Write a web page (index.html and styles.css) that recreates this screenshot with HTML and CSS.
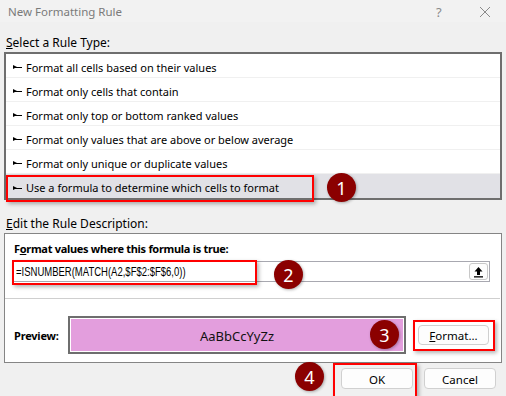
FILE: index.html
```html
<!DOCTYPE html>
<html>
<head>
<meta charset="utf-8">
<link rel="stylesheet" href="styles.css">
</head>
<body>
<div class="dialog">
  <div class="titlebar">
    <span class="title">New Formatting Rule</span>
    <span class="tb-help">?</span>
    <span class="tb-close">
      <svg width="12" height="12" viewBox="0 0 12 12"><path d="M1 1L11 11M11 1L1 11" stroke="#8a8a8a" stroke-width="1"/></svg>
    </span>
  </div>

  <div class="label first"><u>S</u>elect a Rule Type:</div>
  <div class="listbox">
    <div class="item"><span class="pointer"></span>Format all cells based on their values</div>
    <div class="item"><span class="pointer"></span>Format only cells that contain</div>
    <div class="item"><span class="pointer"></span>Format only top or bottom ranked values</div>
    <div class="item"><span class="pointer"></span>Format only values that are above or below average</div>
    <div class="item"><span class="pointer"></span>Format only unique or duplicate values</div>
    <div class="item selected"><span class="pointer"></span>Use a formula to determine which cells to format</div>
  </div>

  <div class="label second"><u>E</u>dit the Rule Description:</div>
  <div class="descbox">
    <div class="desc-title">F<u>o</u>rmat values where this formula is true:</div>
    <div class="formula">
      <span class="formula-cell"><span class="formula-text">=ISNUMBER(MATCH(A2,$F$2:$F$6,0))</span></span>
      <span class="collapse-btn">
        <svg width="11" height="12" viewBox="0 0 11 12"><path d="M5.5 1L1.5 5.5H4V9H7V5.5H9.5Z" fill="#000"/><rect x="1" y="10.2" width="9" height="1.3" fill="#000"/></svg>
      </span>
    </div>
    <div class="sep"></div>
    <div class="preview-row">
      <span class="preview-label">Preview:</span>
      <div class="preview-box"><div class="preview-fill">AaBbCcYyZz</div></div>
      <span class="btn format-btn"><u>F</u>ormat...</span>
    </div>
  </div>

  <div class="buttons">
    <span class="btn">OK</span>
    <span class="btn">Cancel</span>
  </div>
</div>

<div class="annotations">
  <div class="redbox rb1"></div>
  <div class="redbox rb2"></div>
  <div class="redbox rb3"></div>
  <div class="redbox rb4"></div>
  <div class="badge b1">1</div>
  <div class="badge b2">2</div>
  <div class="badge b3">3</div>
  <div class="badge b4">4</div>
</div>
</body>
</html>
```

FILE: styles.css
```css
html, body {
  margin: 0;
  padding: 0;
}
body {
  width: 506px;
  height: 396px;
  overflow: hidden;
  background: #f0f0f0;
  font-family: "Segoe UI", "Noto Sans", "Open Sans", sans-serif;
  font-size: 12px;
  color: #000;
  position: relative;
}
.dialog {
  display: flex;
  flex-direction: column;
}
.titlebar {
  height: 22px;
  display: flex;
  align-items: center;
  padding-left: 8px;
  padding-top: 1px;
  box-sizing: border-box;
  background: #f2f2f2;
  color: #7a7a7a;
  font-size: 11.5px;
}
.title { flex: 1; }
.tb-help {
  width: 10px;
  margin-right: 33px;
  color: #8a8a8a;
  font-size: 13px;
}
.tb-close {
  display: flex;
  margin-right: 15px;
}
.label {
  line-height: 16px;
  height: 16px;
  padding-left: 6px;
}
.label.first { margin-top: 13px; margin-bottom: 1px; }
.label.second { margin-top: 16px; margin-bottom: 1px; }
u { text-decoration: underline; text-underline-offset: 1px; }

.listbox {
  margin: 0 4px;
  border: 2px solid #6e6e6e;
  background: #fff;
  display: flex;
  flex-direction: column;
}
.item {
  height: 24px;
  box-sizing: border-box;
  display: flex;
  align-items: center;
  padding-left: 7px;
  padding-top: 3px;
  border-bottom: 1px solid #f0f0f0;
  font-size: 11px;
}
.item:last-child { border-bottom: none; }
.item.selected { background: #e1e1e6; }
.pointer {
  width: 9px;
  height: 5px;
  margin-right: 4px;
  margin-top: 1px;
  background:
    linear-gradient(#000, #000) 2px 2px / 7px 1px no-repeat;
  position: relative;
}
.pointer::before {
  content: "";
  position: absolute;
  left: 0;
  top: 0;
  border-top: 2.5px solid transparent;
  border-bottom: 2.5px solid transparent;
  border-left: 4px solid #000;
}

.descbox {
  margin: 0 4px;
  border: 1px solid #858585;
  background: #fff;
  height: 128px;
  display: flex;
  flex-direction: column;
}
.desc-title {
  font-weight: bold;
  font-size: 11px;
  letter-spacing: -0.3px;
  line-height: 16px;
  margin-top: 7px;
  padding-left: 9px;
}
.formula {
  margin: 4px 11px 0 7px;
  height: 21px;
  box-sizing: border-box;
  border: 1px solid #a8a8b0;
  display: flex;
  align-items: center;
  padding-left: 3px;
  padding-right: 1px;
}
.formula-cell {
  flex: 1;
  display: flex;
  align-items: center;
  overflow: hidden;
}
.formula-text {
  display: inline-block;
  white-space: nowrap;
  font-family: "Liberation Sans", Arial, sans-serif;
  font-size: 12.5px;
  transform: scaleX(0.76);
  transform-origin: left center;
  padding-top: 1px;
}
.collapse-btn {
  width: 19px;
  height: 17px;
  box-sizing: border-box;
  border: 1px solid #c8c8c8;
  border-radius: 3px;
  background: #fdfdfd;
  display: flex;
  align-items: center;
  justify-content: center;
}
.sep {
  height: 1px;
  background: #cfcfcf;
  margin: 16px 1px 0 0;
}
.preview-row {
  display: flex;
  align-items: center;
  margin-top: 17px;
  padding-left: 9px;
}
.preview-label {
  font-weight: bold;
  font-size: 11px;
  letter-spacing: -0.2px;
  width: 54px;
  padding-top: 1px;
}
.preview-box {
  width: 338px;
  height: 38px;
  box-sizing: border-box;
  border: 2px solid #6e6e6e;
  padding: 1px;
  background: #fff;
}
.preview-fill {
  height: 100%;
  background: #e39edd;
  display: flex;
  align-items: center;
  justify-content: center;
  font-size: 13px;
  color: #111;
  padding-top: 1px;
  box-sizing: border-box;
}
.btn {
  width: 72px;
  height: 21px;
  box-sizing: border-box;
  border: 1px solid #d0d0d0;
  border-radius: 4px;
  background: #fdfdfd;
  display: flex;
  align-items: center;
  justify-content: center;
  font-size: 11.5px;
  padding-top: 1px;
}
.format-btn {
  margin-left: 12px;
  width: 71px;
  height: 20px;
}
.buttons {
  display: flex;
  justify-content: flex-end;
  gap: 11px;
  margin-top: 5px;
  padding-right: 10px;
}

.annotations {
  position: absolute;
  inset: 0;
  pointer-events: none;
}
.redbox {
  position: absolute;
  box-sizing: border-box;
  border: 2.5px solid #ff0000;
  box-shadow: 2px 2px 4px rgba(0,0,0,0.3);
}
.rb1 { left: 6px; top: 175px; width: 308px; height: 27px; }
.rb2 { left: 12px; top: 260px; width: 245px; height: 25px; }
.rb3 { left: 413px; top: 320px; width: 82px; height: 31px; }
.rb4 { left: 333px; top: 363px; width: 84px; height: 36px; }
.badge {
  position: absolute;
  width: 29px;
  height: 29px;
  border-radius: 50%;
  background: #8b0000;
  color: #fff;
  font-family: "Noto Sans", sans-serif;
  font-size: 18px;
  display: flex;
  align-items: center;
  justify-content: center;
  box-shadow: 1px 1px 3px rgba(0,0,0,0.3);
}
.b1 { left: 327px; top: 173px; }
.b2 { left: 274px; top: 260px; }
.b3 { left: 370px; top: 320px; }
.b4 { left: 295px; top: 362px; }
```
